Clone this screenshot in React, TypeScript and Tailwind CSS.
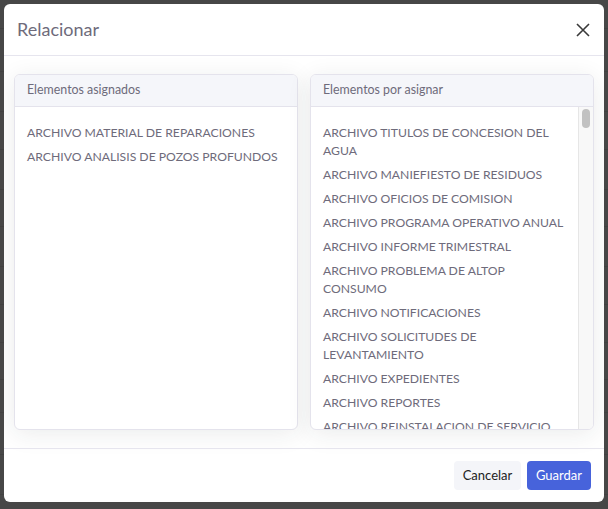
import React from 'react';

const asignados = ['ARCHIVO MATERIAL DE REPARACIONES', 'ARCHIVO ANALISIS DE POZOS PROFUNDOS'];

const porAsignar = [
  'ARCHIVO TITULOS DE CONCESION DEL AGUA',
  'ARCHIVO MANIEFIESTO DE RESIDUOS',
  'ARCHIVO OFICIOS DE COMISION',
  'ARCHIVO PROGRAMA OPERATIVO ANUAL',
  'ARCHIVO INFORME TRIMESTRAL',
  'ARCHIVO PROBLEMA DE ALTOP CONSUMO',
  'ARCHIVO NOTIFICACIONES',
  'ARCHIVO SOLICITUDES DE LEVANTAMIENTO',
  'ARCHIVO EXPEDIENTES',
  'ARCHIVO REPORTES',
  'ARCHIVO REINSTALACION DE SERVICIO',
];

// the table rows visible behind the overlay
const bgRows = [29, 43, 40, 38, 40, 37, 40, 38, 38, 37, 33, 42, 40];

const Panel: React.FC<{ title: string; items: string[]; scroll?: boolean }> = ({ title, items, scroll }) => (
  <div className="flex flex-col h-[356px] rounded-md border border-[#e4e3ec] bg-white shadow-[0_4px_24px_0_rgba(34,41,47,0.09)] overflow-hidden">
    <div className="h-8 shrink-0 flex items-center px-[12px] bg-[#f5f6fa] border-b border-[#e4e3ec] text-[12.4px] text-[#6e6b7b]">
      {title}
    </div>
    <div className="flex flex-1 min-h-0">
      <ul className="flex-1 overflow-hidden pt-[17px] pl-[12px] pr-[10px]">
        {items.map((it) => (
          <li key={it} className="text-[12.2px] leading-[18px] pb-[6px] text-[#6e6b7b]">
            {it}
          </li>
        ))}
      </ul>
      {scroll && (
        <div className="w-[15px] shrink-0 bg-[#f8f8f8] border-l border-[#e6e6e6] pt-[2px] flex justify-center">
          <div className="w-[8px] h-[19px] rounded-full bg-[#c1c1c1]" />
        </div>
      )}
    </div>
  </div>
);

const App: React.FC = () => {
  return (
    <div className="relative w-[608px] h-[509px] overflow-hidden bg-[#474747] font-['Lato',sans-serif]">
      <div className="flex flex-col">
        {bgRows.map((h, i) => (
          <div key={i} style={{ height: h }} className="shrink-0 border-b border-[#414141]" />
        ))}
      </div>

      <div className="absolute left-[4px] top-[4px] w-[600px] h-[498px] flex flex-col rounded-md bg-white overflow-hidden">
        <div className="h-[52px] shrink-0 flex items-center justify-between pl-[13px] pr-[14px] border-b border-[#e6e5ee]">
          <h2 className="text-[18px] text-[#6e6b7b]">Relacionar</h2>
          <button className="text-[#3a3a3a]">
            <svg width="14" height="14" viewBox="0 0 14 14" fill="none" stroke="currentColor" strokeWidth="1.6">
              <path d="M1 1l12 12M13 1L1 13" />
            </svg>
          </button>
        </div>

        <div className="grid grid-cols-2 gap-3 px-[10px] pt-[18px] h-[392px] shrink-0">
          <Panel title="Elementos asignados" items={asignados} />
          <Panel title="Elementos por asignar" items={porAsignar} scroll />
        </div>

        <div className="flex-1 flex items-center justify-end gap-[6px] pr-[13px] border-t border-[#e6e5ee]">
          <button className="h-[29px] w-[67px] rounded bg-[#f4f5f9] text-[13px] text-[#222]">Cancelar</button>
          <button className="h-[29px] w-[64px] rounded bg-[#4763db] text-[13px] text-white">Guardar</button>
        </div>
      </div>
    </div>
  );
};

export default App;
